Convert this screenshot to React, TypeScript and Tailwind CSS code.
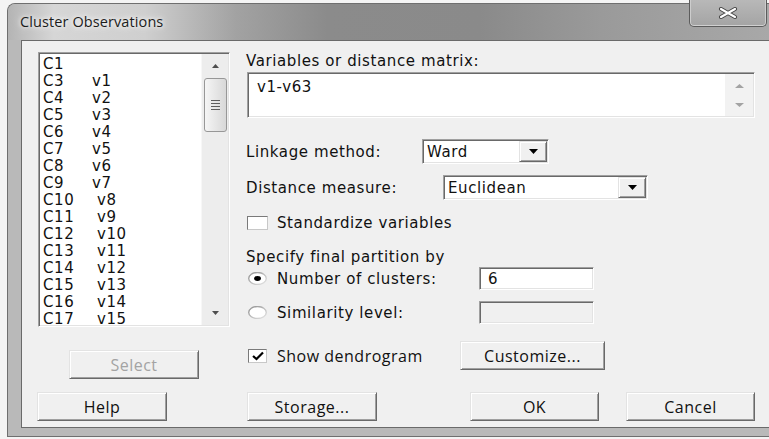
import React from "react";

const label =
  "font-['DejaVu_Sans',sans-serif] text-[15px] leading-[18px] tracking-[0.6px] text-[#111]";
const ui = "font-['Open_Sans',sans-serif] text-[16px] tracking-[0.5px] text-[#111]";

const sunken =
  "border border-t-[#a0a0a0] border-l-[#a0a0a0] border-b-white border-r-white shadow-[inset_1px_1px_0_#696969,inset_-1px_-1px_0_#e3e3e3]";
const raised =
  "border border-t-[#e3e3e3] border-l-[#e3e3e3] border-b-[#696969] border-r-[#696969] shadow-[inset_1px_1px_0_#ffffff,inset_-1px_-1px_0_#a0a0a0] bg-[#f0f0f0]";

const columns: [string, string][] = [
  ["C1", ""],
  ["C3", "v1"],
  ["C4", "v2"],
  ["C5", "v3"],
  ["C6", "v4"],
  ["C7", "v5"],
  ["C8", "v6"],
  ["C9", "v7"],
  ["C10", "v8"],
  ["C11", "v9"],
  ["C12", "v10"],
  ["C13", "v11"],
  ["C14", "v12"],
  ["C15", "v13"],
  ["C16", "v14"],
  ["C17", "v15"],
];

function Tri({ up, color, w = 7, h = 4 }: { up?: boolean; color: string; w?: number; h?: number }) {
  return (
    <svg width={w} height={h} viewBox={`0 0 ${w} ${h}`}>
      {up ? (
        <polygon points={`0,${h} ${w},${h} ${w / 2},0`} fill={color} />
      ) : (
        <polygon points={`0,0 ${w},0 ${w / 2},${h}`} fill={color} />
      )}
    </svg>
  );
}

function Button({
  text,
  className,
  disabled,
}: {
  text: string;
  className: string;
  disabled?: boolean;
}) {
  return (
    <div
      className={`${raised} ${className} flex items-center justify-center ${ui} ${
        disabled ? "text-[#a3a3a3]" : ""
      }`}
    >
      {text}
    </div>
  );
}

function CheckBox({ checked, className }: { checked?: boolean; className: string }) {
  return (
    <div
      className={`${className} bg-white border border-t-[#7a7a7a] border-l-[#7a7a7a] border-b-[#c8c8c8] border-r-[#c8c8c8] flex items-center justify-center`}
    >
      {checked && (
        <svg width="14" height="10" viewBox="0 0 14 10">
          <polyline points="2,5 5.5,8 12,1.5" fill="none" stroke="#000" strokeWidth="2.2" />
        </svg>
      )}
    </div>
  );
}

function Radio({ checked }: { checked?: boolean }) {
  return (
    <svg width="19" height="13" viewBox="0 0 19 13">
      <defs>
        <linearGradient id={checked ? "rg1" : "rg2"} x1="0" y1="0" x2="1" y2="1">
          <stop offset="0" stopColor="#8e8e8e" />
          <stop offset="1" stopColor="#e6e6e6" />
        </linearGradient>
      </defs>
      <ellipse cx="9.5" cy="6.5" rx="8.8" ry="6" fill="#fff" stroke={`url(#${checked ? "rg1" : "rg2"})`} strokeWidth="1.4" />
      {checked && <ellipse cx="9.5" cy="6.5" rx="3.4" ry="2.4" fill="#000" />}
    </svg>
  );
}

function ComboBox({ value, width }: { value: string; width: string }) {
  return (
    <div className={`${sunken} ${width} h-[25px] bg-white flex items-stretch`}>
      <div className={`flex-1 flex items-center pl-[4px] ${label}`}>{value}</div>
      <div className={`${raised} w-[28px] m-[1px] flex items-center justify-center`}>
        <Tri color="#000" w={9} h={5} />
      </div>
    </div>
  );
}

function VariableList() {
  return (
    <div className={`${sunken} w-[192px] h-[275px] bg-white flex`}>
      <div className={`flex-1 pl-[4px] pt-[2px] ${label} leading-[17px]`}>
        {columns.map(([c, v]) => (
          <div key={c} className="flex h-[17px]">
            <span className={c.length > 2 ? "w-[54px]" : "w-[49px]"}>{c}</span>
            <span>{v}</span>
          </div>
        ))}
      </div>
      <div className="w-[27px] mr-[1px] my-[1px] bg-[#ededed] border-l border-[#f7f7f7] flex flex-col items-center">
        <div className="h-[24px] flex items-center justify-center">
          <Tri up color="#4e4e4e" />
        </div>
        <div className="w-[23px] h-[54px] rounded-[3px] border border-[#979797] bg-gradient-to-r from-[#f5f5f5] to-[#d8d8d8] flex flex-col items-center justify-center gap-[2px]">
          <div className="w-[9px] h-px bg-[#5e5e5e]" />
          <div className="w-[9px] h-px bg-[#5e5e5e]" />
          <div className="w-[9px] h-px bg-[#5e5e5e]" />
          <div className="w-[9px] h-px bg-[#5e5e5e]" />
        </div>
        <div className="flex-1" />
        <div className="h-[24px] flex items-center justify-center">
          <Tri color="#4e4e4e" />
        </div>
      </div>
    </div>
  );
}

export default function App() {
  return (
    <div className="w-[769px] h-[439px] bg-[#f4f4f4] overflow-hidden">
      <div className="ml-[7px] mt-[3px] w-[762px] h-[434px] rounded-tl-[8px] border-l border-t border-b border-[#6f6f6f] bg-[#b9b9b9] flex flex-col">
        {/* title bar */}
        <div className="h-[36px] rounded-tl-[7px] flex items-start bg-[linear-gradient(to_right,#b4b4b4_0%,#d6d6d6_6%,#cfcfcf_18%,#a2a2a2_30%,#8b8b8b_42%,#8a8a8a_62%,#9a9a9a_78%,#a8a8a8_100%)]">
          <div className="ml-[12px] mt-[8px] font-['Open_Sans',sans-serif] text-[14.5px] leading-[20px] tracking-[0.1px] text-[#1c1c1c] [text-shadow:0_0_8px_#ffffff,0_0_4px_#ffffff]">
            Cluster Observations
          </div>
          <div className="ml-auto mr-[2px] -mt-[4px] w-[78px] h-[27px] rounded-b-[5px] border border-t-0 border-[#5c5c5c] bg-gradient-to-b from-[#b8b8b8] to-[#a4a4a4] shadow-[inset_0_-1px_0_#d0d0d0,inset_1px_0_0_#cdcdcd,inset_-1px_0_0_#cdcdcd] flex items-center justify-center">
            <svg width="20" height="12" viewBox="0 0 20 12">
              <path d="M3 2 L17 10 M3 10 L17 2" stroke="#434343" strokeWidth="4" strokeLinecap="round" />
              <path d="M3 2 L17 10 M3 10 L17 2" stroke="#ffffff" strokeWidth="2.2" strokeLinecap="round" />
            </svg>
          </div>
        </div>

        {/* client area */}
        <div className="ml-[13px] h-[388px] border-l border-t border-b border-[#6a6a6a] bg-[#f0f0f0] pl-[15px] pt-[11px] flex flex-col">
          <div className="flex items-start">
            {/* left column */}
            <div className="ml-[1px] w-[192px] flex flex-col">
              <VariableList />
              <Button text="Select" disabled className="mt-[23px] ml-[31px] w-[130px] h-[29px]" />
            </div>

            {/* right column */}
            <div className="ml-[16px] w-[509px] flex flex-col">
              <div className={label}>Variables or distance matrix:</div>
              <div className={`${sunken} mt-[2px] ml-[1px] w-[508px] h-[46px] bg-white flex`}>
                <div className={`flex-1 pl-[9px] pt-[5px] ${label}`}>v1-v63</div>
                <div className="w-[28px] my-[1px] mr-[1px] bg-[#f2f2f2] flex flex-col items-center justify-center gap-[15px]">
                  <Tri up color="#a3a3a3" w={9} h={4} />
                  <Tri color="#a3a3a3" w={9} h={4} />
                </div>
              </div>

              <div className="mt-[21px] h-[25px] flex items-center">
                <div className={`w-[176px] ${label}`}>Linkage method:</div>
                <ComboBox value="Ward" width="w-[127px]" />
              </div>

              <div className="mt-[11px] h-[25px] flex items-center">
                <div className={`w-[197px] ${label}`}>Distance measure:</div>
                <ComboBox value="Euclidean" width="w-[205px]" />
              </div>

              <div className="mt-[14px] h-[18px] flex items-center">
                <CheckBox className="ml-[1px] w-[21px] h-[14px]" />
                <div className={`ml-[9px] ${label}`}>Standardize variables</div>
              </div>

              <div className={`mt-[16px] ${label}`}>Specify final partition by</div>

              <div className="mt-[1px] h-[23px] flex items-center">
                <div className="w-[31px] pl-[2px] flex items-center">
                  <Radio checked />
                </div>
                <div className={`w-[202px] ${label}`}>Number of clusters:</div>
                <div className={`${sunken} w-[115px] h-[23px] bg-white pl-[8px] flex items-center ${label}`}>6</div>
              </div>

              <div className="mt-[11px] h-[23px] flex items-center">
                <div className="w-[31px] pl-[2px] flex items-center">
                  <Radio />
                </div>
                <div className={`w-[202px] ${label}`}>Similarity level:</div>
                <div className={`${sunken} w-[115px] h-[23px] bg-[#f0f0f0]`} />
              </div>

              <div className="mt-[17px] h-[29px] flex items-center">
                <div className="w-[31px] pl-[2px] flex items-center">
                  <CheckBox checked className="w-[19px] h-[14px]" />
                </div>
                <div className={`w-[183px] ${ui}`}>Show dendrogram</div>
                <Button text="Customize..." className="w-[145px] h-[29px]" />
              </div>
            </div>
          </div>

          {/* dialog buttons */}
          <div className="mt-[13px] flex items-center">
            <Button text="Help" className="w-[130px] h-[29px]" />
            <Button text="Storage..." className="ml-[80px] w-[130px] h-[29px]" />
            <Button text="OK" className="ml-[93px] w-[129px] h-[29px]" />
            <Button text="Cancel" className="ml-[27px] w-[129px] h-[29px]" />
          </div>
        </div>
      </div>
    </div>
  );
}
